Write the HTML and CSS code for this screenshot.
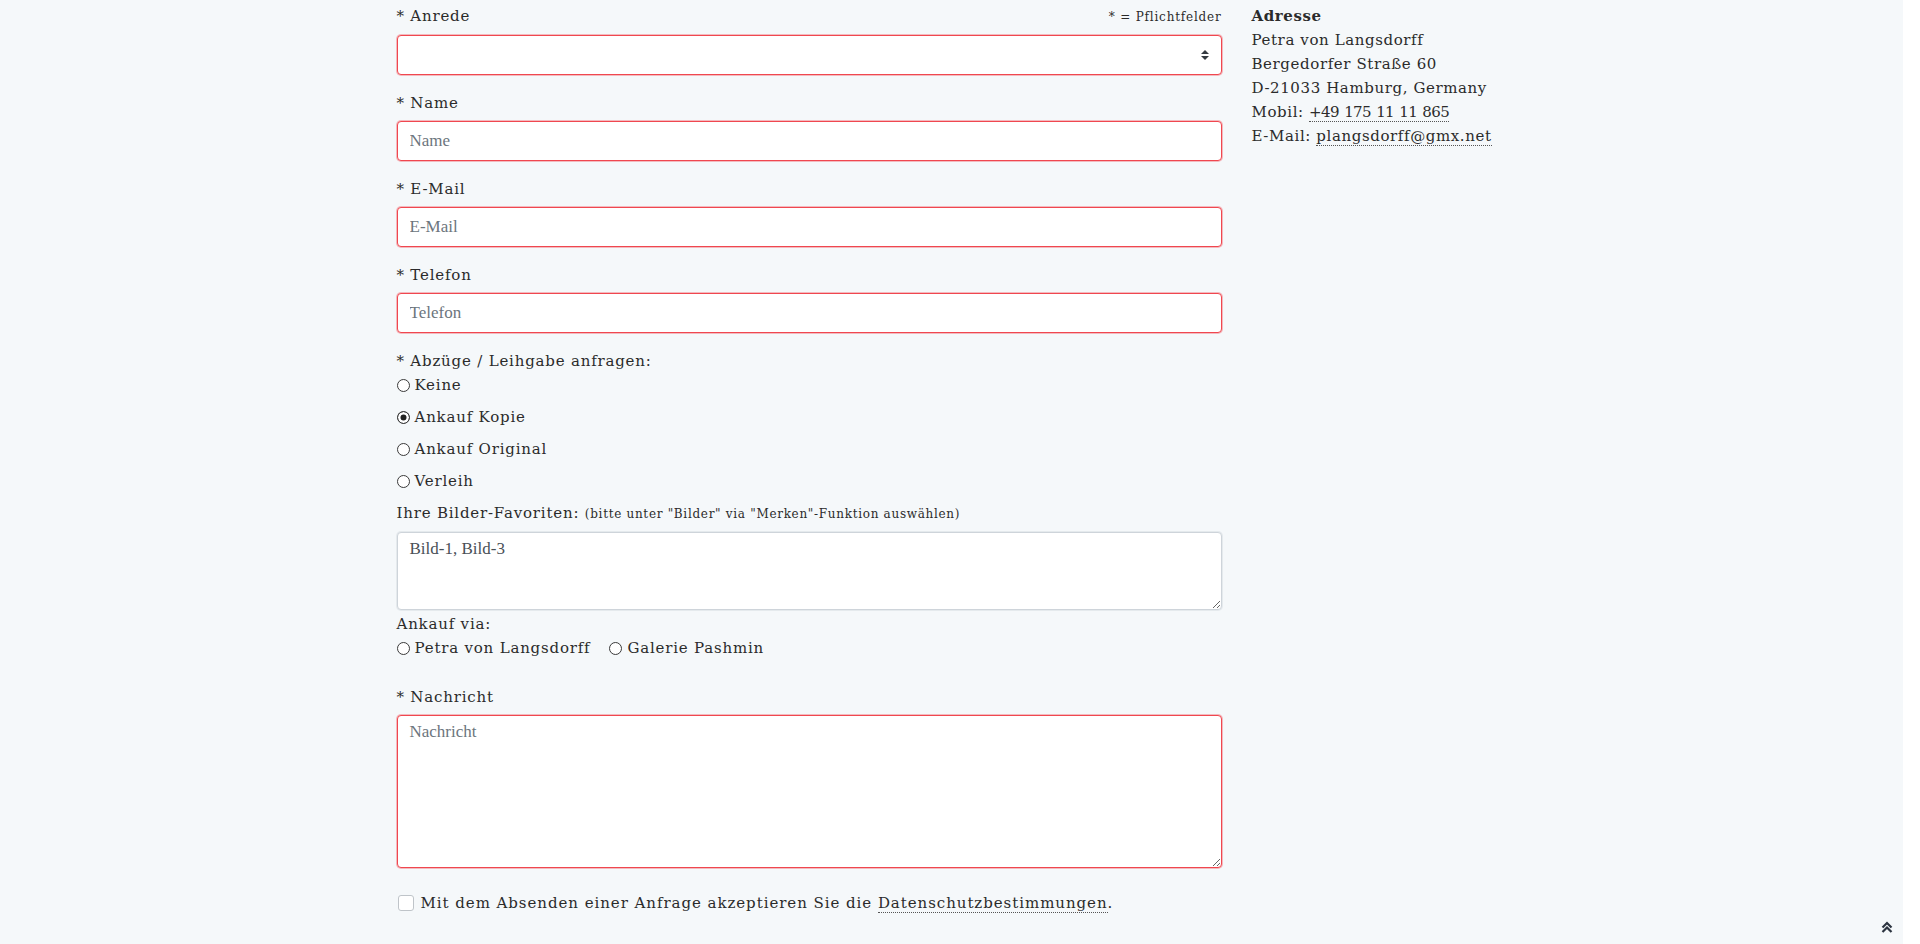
FILE: index.html
```html
<!DOCTYPE html>
<html lang="de">

<head>
  <meta charset="UTF-8">
  <meta name="viewport" content="width=device-width, initial-scale=1.0">
  <title>Kontakt</title>
  <link rel="stylesheet" href="styles.css">
</head>

<body>
  <div class="page">
    <div class="container">
      <form class="col-main">
        <div class="field">
          <div class="label-row">
            <label for="anrede">* Anrede</label>
            <span class="hint">* = Pflichtfelder</span>
          </div>
          <div class="select-wrap">
            <select id="anrede" class="control required">
              <option></option>
              <option>Frau</option>
              <option>Herr</option>
            </select>
            <svg class="select-arrows" width="8" height="10" viewBox="0 0 4 5">
              <path d="M2 0L0 2h4zm0 5L0 3h4z" fill="#343a40" />
            </svg>
          </div>
        </div>

        <div class="field">
          <label for="name">* Name</label>
          <input id="name" class="control required" type="text" placeholder="Name">
        </div>

        <div class="field">
          <label for="email">* E-Mail</label>
          <input id="email" class="control required" type="email" placeholder="E-Mail">
        </div>

        <div class="field">
          <label for="tel">* Telefon</label>
          <input id="tel" class="control required" type="tel" placeholder="Telefon">
        </div>

        <div class="group">
          <div class="group-title">* Abzüge / Leihgabe anfragen:</div>
          <label class="radio"><input type="radio" name="art"> Keine</label>
          <label class="radio"><input type="radio" name="art" checked> Ankauf Kopie</label>
          <label class="radio"><input type="radio" name="art"> Ankauf Original</label>
          <label class="radio"><input type="radio" name="art"> Verleih</label>
        </div>

        <div class="favs">
          <label for="favs">Ihre Bilder-Favoriten: <small>(bitte unter "Bilder" via "Merken"-Funktion auswählen)</small></label>
          <textarea id="favs" class="control fav-box">Bild-1, Bild-3</textarea>
        </div>

        <div class="via">
          <div class="group-title">Ankauf via:</div>
          <div class="inline">
            <label class="radio"><input type="radio" name="via"> Petra von Langsdorff</label>
            <label class="radio"><input type="radio" name="via"> Galerie Pashmin</label>
          </div>
        </div>

        <div class="field msg">
          <label for="msg">* Nachricht</label>
          <textarea id="msg" class="control required msg-box" placeholder="Nachricht"></textarea>
        </div>

        <label class="check">
          <input type="checkbox">
          <span>Mit dem Absenden einer Anfrage akzeptieren Sie die <a href="#">Datenschutzbestimmungen</a>.</span>
        </label>
      </form>

      <aside class="col-side">
        <strong>Adresse</strong>
        <p>Petra von Langsdorff</p>
        <p>Bergedorfer Straße 60</p>
        <p>D-21033 Hamburg, Germany</p>
        <p>Mobil: <a href="#" class="num">+49 175 11 11 865</a></p>
        <p>E-Mail: <a href="#">plangsdorff@gmx.net</a></p>
      </aside>
    </div>
  </div>

  <a class="to-top" href="#">
    <svg width="14" height="14" viewBox="0 0 14 14">
      <path d="M2.5 7.5L7 3l4.5 4.5M2.5 12L7 7.5l4.5 4.5" fill="none" stroke="#2c3440" stroke-width="2.2" />
    </svg>
  </a>
</body>

</html>
```

FILE: styles.css
```css
* {
  padding: 0;
  margin: 0;
  box-sizing: border-box;
}

html {
  background-color: #fff;
  height: 100%;
}

body {
  height: 100%;
  overflow: hidden;
  font-family: "DejaVu Serif", serif;
  font-size: 15px;
  letter-spacing: 0.8px;
  line-height: 24px;
  color: #2b2b2b;
}

.page {
  width: calc(100% - 17px);
  height: 100%;
  background-color: #f5f8fa;
  padding-top: 4px;
}

.container {
  width: 1140px;
  margin: 0 auto;
  display: flex;
}

.col-main {
  width: 855px;
  padding: 0 15px;
}

.col-side {
  width: 285px;
  padding: 0 15px;
  letter-spacing: 0.6px;
}

.col-side strong {
  display: block;
  font-weight: bold;
}

.col-side .num {
  letter-spacing: -0.6px;
  word-spacing: 1px;
}

a {
  color: #2b2b2b;
  text-decoration: none;
  border-bottom: 1px dotted #555;
}

/* fields */
.field {
  margin-bottom: 16px;
}

.field label {
  display: block;
  margin-bottom: 6px;
}

.label-row {
  display: flex;
  justify-content: space-between;
  align-items: baseline;
  margin-bottom: 6px;
}

.label-row label {
  margin-bottom: 0;
}

.hint {
  font-size: 12px;
}

.control {
  display: block;
  width: 100%;
  height: 40px;
  padding: 6px 12px;
  font-family: "Liberation Serif", serif;
  font-size: 17px;
  letter-spacing: 0;
  color: #495057;
  background-color: #fff;
  border: 1px solid #ced4da;
  border-radius: 4px;
  outline: none;
}

.control::placeholder {
  color: #6c757d;
}

.required {
  border-color: #f0474f;
  box-shadow: 0 0 0 1px rgba(240, 71, 79, 0.35);
}

.select-wrap {
  position: relative;
}

.select-wrap select {
  appearance: none;
  -webkit-appearance: none;
}

.select-arrows {
  position: absolute;
  right: 13px;
  top: 15px;
  pointer-events: none;
}

/* radios */
.group-title {
  line-height: 24px;
}

.radio {
  display: flex;
  align-items: center;
  height: 24px;
  margin-bottom: 8px;
}

.radio input,
.check input {
  appearance: none;
  -webkit-appearance: none;
  flex: none;
  background-color: #fff;
}

.radio input {
  width: 13px;
  height: 13px;
  margin-right: 5px;
  border: 1px solid #3a3a3a;
  border-radius: 50%;
}

.radio input:checked {
  background-color: #222;
  box-shadow: inset 0 0 0 2.5px #fff;
}

.favs label {
  display: block;
  margin-bottom: 6px;
}

.favs small {
  font-size: 12px;
  letter-spacing: 0.7px;
}

.fav-box {
  height: 78px;
  resize: vertical;
  margin-bottom: 2px;
  box-shadow: 0 0 0 1px rgba(206, 212, 218, 0.4);
}

.via {
  margin-bottom: 25px;
}

.inline {
  display: flex;
}

.inline .radio {
  margin-bottom: 0;
  margin-right: 19px;
}

.msg {
  margin-bottom: 23px;
}

.msg-box {
  height: 153px;
  resize: vertical;
}

/* checkbox */
.check {
  display: flex;
  align-items: center;
  height: 24px;
  letter-spacing: 0.95px;
}

.check input {
  width: 16px;
  height: 16px;
  margin: 0 7px 0 1px;
  border: 1px solid #bfc4c9;
  border-radius: 3px;
}

.to-top {
  position: fixed;
  right: 26px;
  bottom: 10px;
  border: none;
  display: block;
  line-height: 0;
}
```
